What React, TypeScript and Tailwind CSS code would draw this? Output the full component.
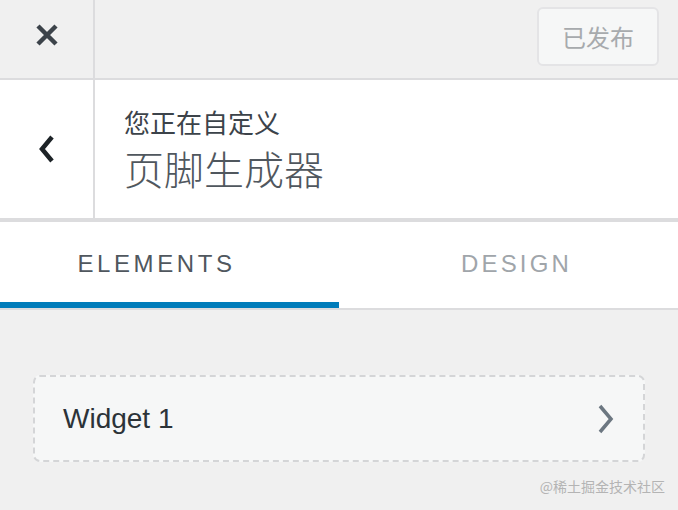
import React from "react";

const cjk = '"Noto Sans CJK SC", "Noto Sans", sans-serif';
const latin = '"Liberation Sans", Arial, sans-serif';

export default function App() {
  return (
    <div className="w-[678px] h-[510px] bg-[#f0f0f0] flex flex-col overflow-hidden" style={{ fontFamily: cjk }}>
      {/* top bar */}
      <div className="h-[80px] flex border-b-2 border-[#dcdcde] shrink-0">
        <div className="w-[95px] border-r-2 border-[#dcdcde] flex items-center justify-center pb-[9px]">
          <svg width="24" height="24" viewBox="0 0 24 24">
            <path d="M3 3L21 21M21 3L3 21" stroke="#3c434a" strokeWidth="4.5" />
          </svg>
        </div>
        <div className="flex-1 flex items-start justify-end pr-[19px] pt-[7px]">
          <div className="w-[122px] h-[59px] rounded-md border-2 border-[#e4e4e6] bg-[#f6f7f7] flex items-center justify-center text-[24px] text-[#a7aaad]">
            已发布
          </div>
        </div>
      </div>

      {/* header */}
      <div className="h-[142px] bg-white flex border-b-4 border-[#dcdcde] shrink-0">
        <div className="w-[95px] border-r-2 border-[#dcdcde] flex items-center justify-center">
          <svg width="20" height="28" viewBox="0 0 20 28">
            <path d="M15 2L5 14L15 26" stroke="#1d2327" strokeWidth="4.5" fill="none" />
          </svg>
        </div>
        <div className="flex-1 flex flex-col pl-[29px] pt-[26px]">
          <div className="text-[26px] leading-[32px] text-[#3c434a]">您正在自定义</div>
          <div className="text-[40px] leading-[48px] font-light text-[#50575e] mt-[6px]">页脚生成器</div>
        </div>
      </div>

      {/* tabs */}
      <div className="h-[88px] bg-white flex border-b-2 border-[#dcdcde] shrink-0" style={{ fontFamily: latin }}>
        <div className="w-[339px] flex flex-col">
          <div className="flex-1 flex items-center justify-center text-[24px] tracking-[3.6px] text-[#50575e] pr-[26px] pt-[4px]">ELEMENTS</div>
          <div className="h-[6px] bg-[#007cba]" />
        </div>
        <div className="flex-1 flex items-center justify-center text-[24px] tracking-[3.2px] text-[#a0a5aa] pl-[16px] pb-[2px]">DESIGN</div>
      </div>

      {/* content */}
      <div className="flex-1 flex flex-col px-[33px] pt-[65px]">
        <div className="h-[87px] rounded-[7px] border-2 border-dashed border-[#d4d5d7] bg-[#f6f7f7] flex items-center justify-between pl-[28px] pr-[28px]">
          <span className="text-[28px] text-[#2c3338]" style={{ fontFamily: latin }}>Widget 1</span>
          <svg width="18" height="30" viewBox="0 0 18 30">
            <path d="M3 2L14 15L3 28" stroke="#6c7781" strokeWidth="3.5" fill="none" />
          </svg>
        </div>
        <div className="flex justify-end mr-[-20px] mt-[14px] text-[14px] text-[#b4b4b4]">@稀土掘金技术社区</div>
      </div>
    </div>
  );
}
